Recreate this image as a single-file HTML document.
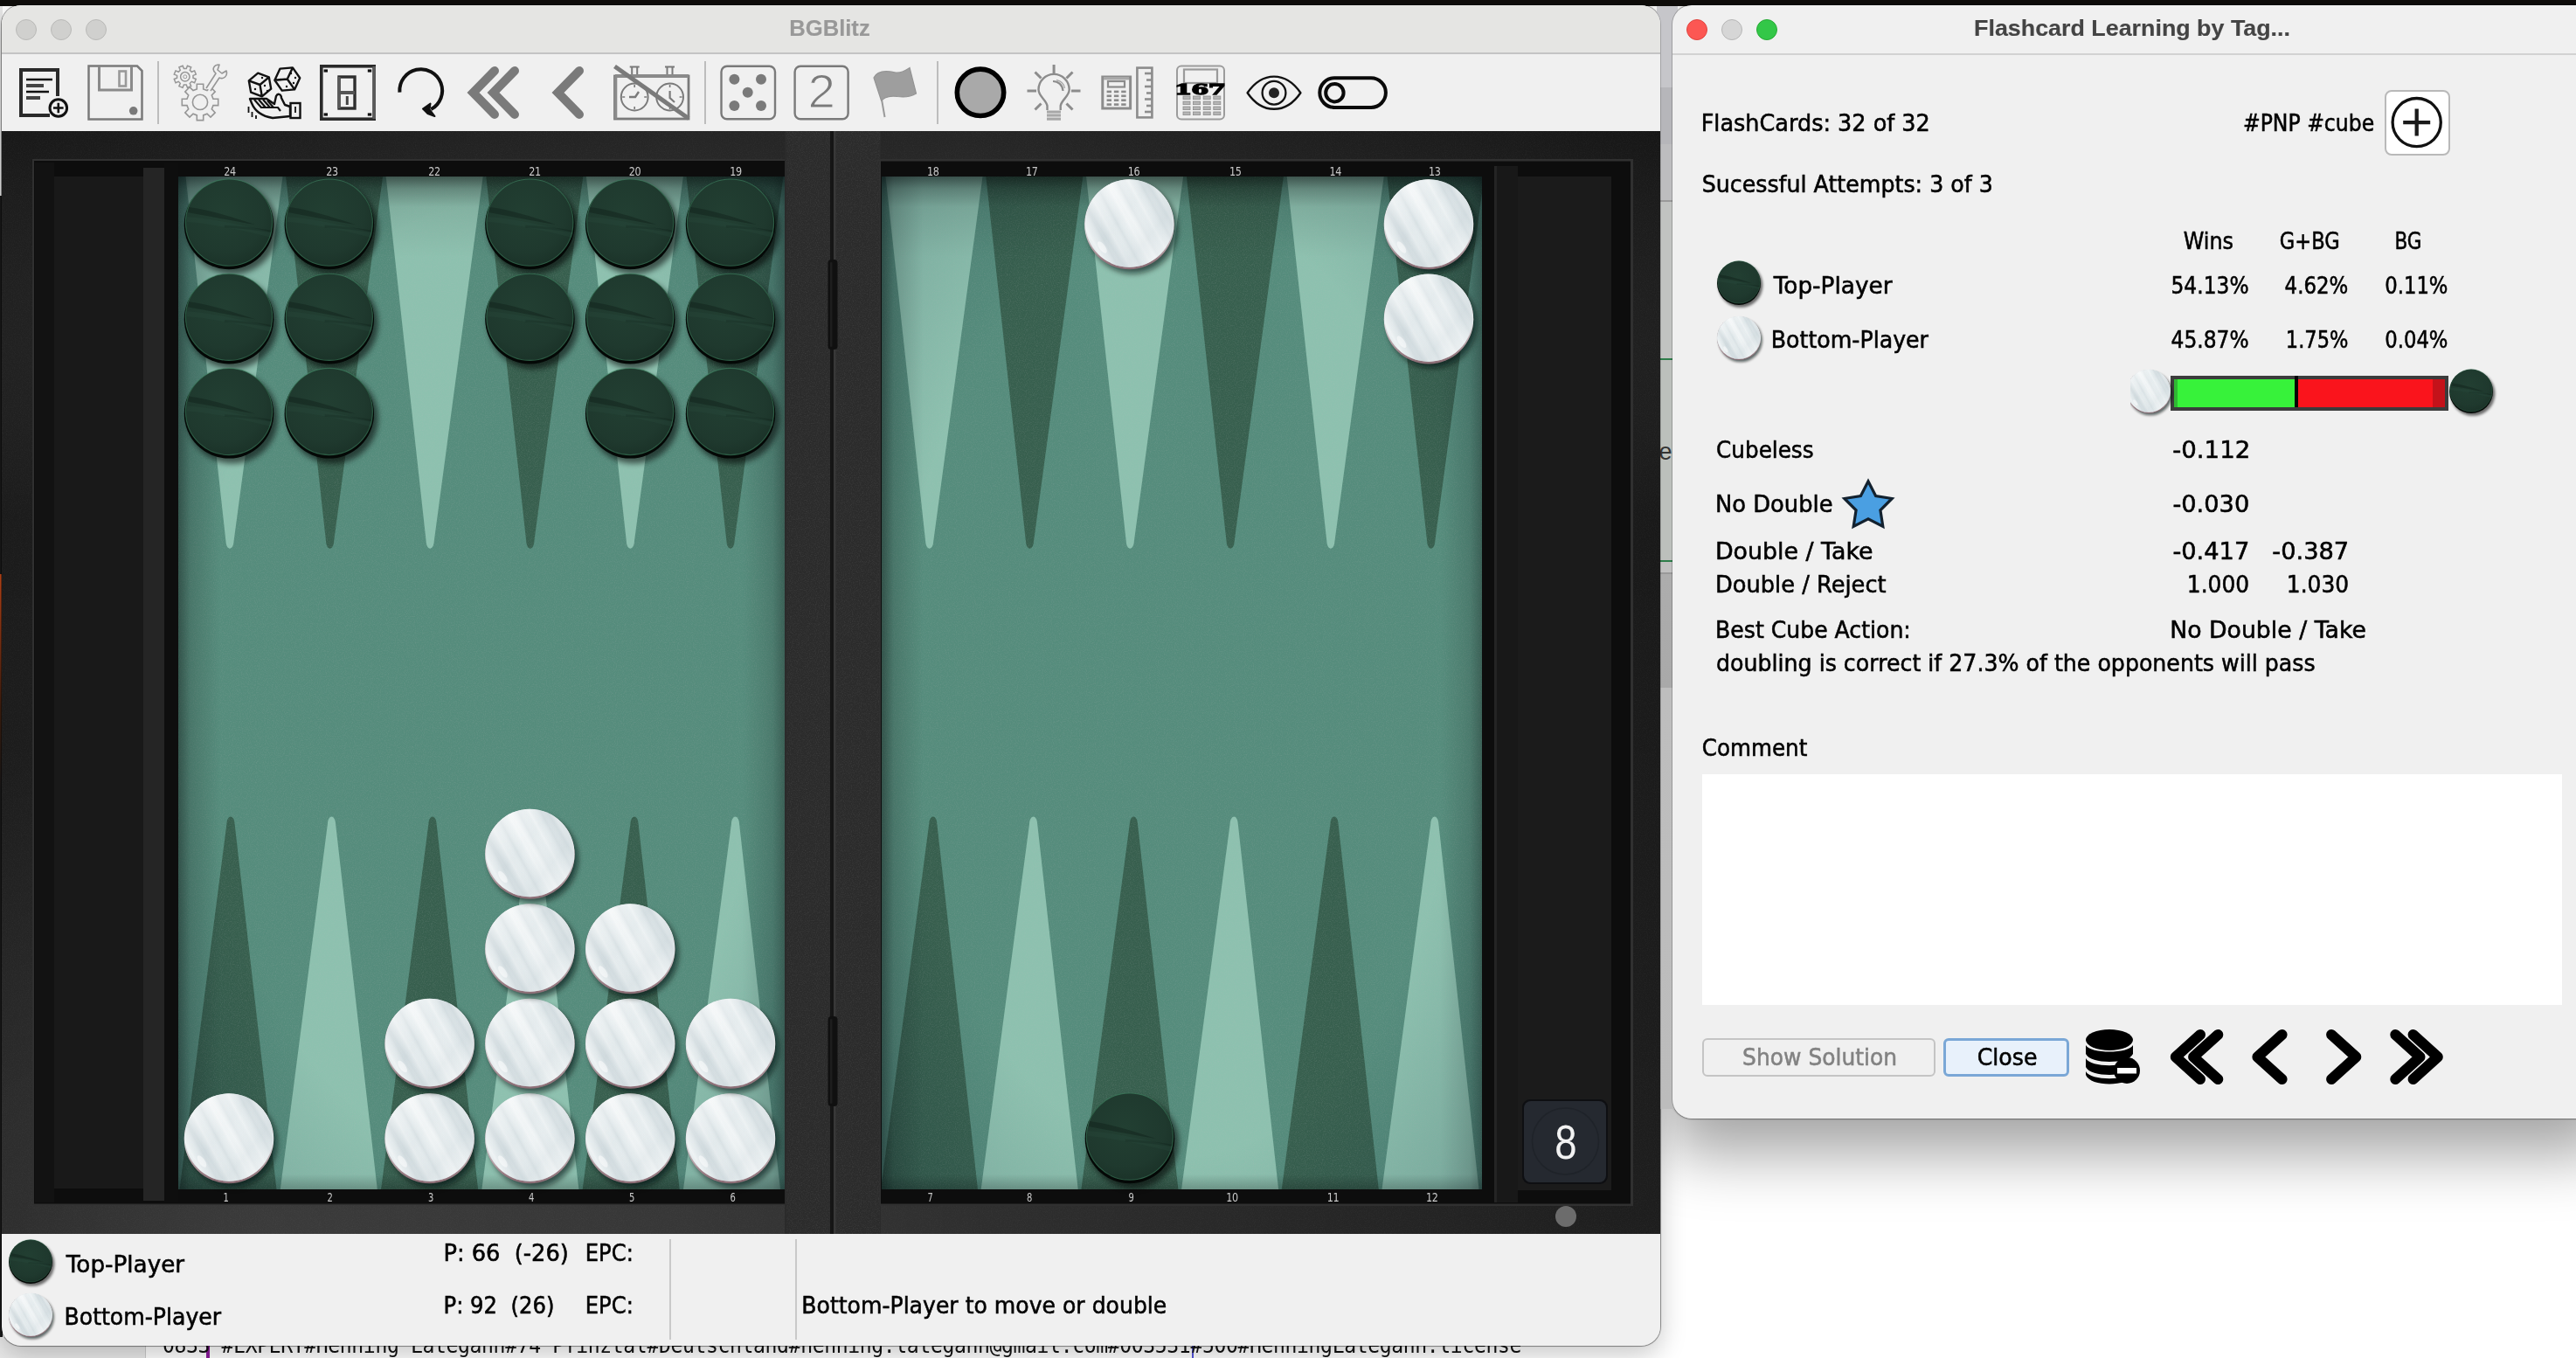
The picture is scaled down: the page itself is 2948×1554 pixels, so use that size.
<!DOCTYPE html><html><head><meta charset="utf-8"><title>BGBlitz</title><style>
*{box-sizing:border-box;margin:0;padding:0}
html,body{width:2948px;height:1554px;overflow:hidden;background:#fff}
body{position:relative;font-family:"DejaVu Sans","Liberation Sans",sans-serif;font-size:26px;color:#000;letter-spacing:-0.42px}
.a{position:absolute}
.t{position:absolute;white-space:pre;line-height:30px;height:30px}
.r{text-align:right}
.ttl{font-family:"Liberation Sans",sans-serif;font-weight:bold;font-size:26px;letter-spacing:0}
svg{position:absolute;overflow:visible}
svg text{font-family:"DejaVu Sans","Liberation Sans",sans-serif}
</style></head><body><div class="a" style="left:0;top:0;width:2948px;height:7px;background:#0f0d0b"></div><div class="a" style="left:0;top:7px;width:3px;height:1547px;background:linear-gradient(#e8e8e8 0,#e8e8e8 14%,#1a1a1a 14%,#1a1a1a 42%,#c84a1a 42%,#402010 52%,#1a1a1a 58%,#1a1a1a 100%)"></div><div class="a" style="left:0;top:1530px;width:166px;height:24px;background:#e9e9e9"></div><div class="a" style="left:166px;top:1530px;width:1740px;height:24px;background:#fff;border-left:1px solid #ccc"></div><div class="a" style="left:236px;top:1530px;width:4px;height:24px;background:#8b1a9b"></div><div class="a" style="left:1364px;top:1530px;width:2px;height:24px;background:#5555dd"></div><svg class="a" style="left:0;top:1530px;opacity:.999" width="1900" height="24" viewBox="0 1530 1900 24"><text x="186" y="1548" font-size="25" fill="#111" textLength="1555" lengthAdjust="spacingAndGlyphs" style="font-family:'DejaVu Sans Mono','Liberation Mono',monospace">0833 #EXPERT#Henning Lategahn#74 Pfinztal#Deutschland#henning.lategahn@gmail.com#003531#500#HenningLategahn.license</text></svg><div class="a" style="left:1914px;top:6px;width:1070px;height:1274px;border-radius:22px;box-shadow:0 34px 70px 6px rgba(0,0,0,.36),0 0 2px 1px rgba(0,0,0,.25)"></div><div class="a" style="left:2px;top:6px;width:1898px;height:1534px;border-radius:22px;box-shadow:0 10px 30px 0 rgba(0,0,0,.22),0 0 1px 1px rgba(0,0,0,.28)"></div><div class="a" style="left:1896px;top:7px;width:24px;height:1262px;background:linear-gradient(#c6c6ca 0,#c6c6ca 93px,#b6b6ba 93px,#b6b6ba 158px,#bdbdbf 158px,#bdbdbf 222px,#9a9a9a 222px,#9a9a9a 224px,#c1c3c1 224px,#c1c3c1 403px,#2e7d4a 403px,#2e7d4a 405px,#bcc0bc 405px,#bcc0bc 634px,#2e7d4a 634px,#2e7d4a 636px,#c0c0c0 636px,#c0c0c0 648px,#999 648px,#999 650px,#adadad 650px,#a9a9a9 780px,#bebebe 780px,#bcbcbc 100%)"></div><svg class="a" style="left:1896px;top:490px" width="18" height="50" viewBox="0 0 18 50"><text x="2.5" y="36" font-size="27" fill="#333" style="font-family:'Liberation Sans',sans-serif">e</text></svg><div class="a" style="left:1914px;top:6px;width:1070px;height:1274px;background:#f0f0f0;border-radius:22px;box-shadow:0 0 0 1px rgba(0,0,0,.2)"></div><div class="a" style="left:1914px;top:61px;width:1040px;height:2px;background:#d2d2d2"></div><div class="a" style="left:1930px;top:22px;width:24px;height:24px;border-radius:50%;background:#fc5753;border:1px solid #e0443e"></div><div class="a" style="left:1970px;top:22px;width:24px;height:24px;border-radius:50%;background:#d6d6d6;border:1px solid #b6b6b6"></div><div class="a" style="left:2010px;top:22px;width:24px;height:24px;border-radius:50%;background:#33c748;border:1px solid #27aa35"></div><div class="a" style="left:2728.5px;top:102.5px;width:75.5px;height:75px;background:#fff;border:2px solid #b9b9b9;border-radius:8px"></div><svg style="left:2737px;top:111px" width="58" height="58" viewBox="0 0 58 58"><circle cx="28.7" cy="29.1" r="27.6" fill="none" stroke="#111" stroke-width="3.3"/><path d="M28.7,13.6 V44.6 M13.2,29.1 H44.2" stroke="#1a1a1a" stroke-width="4.3" fill="none"/></svg><svg style="left:1955.5px;top:289.7px;" width="72" height="72" viewBox="-34 -34 72 72"><g transform="scale(0.4883)"><use href="#ckd"/></g></svg><svg style="left:1955.5px;top:352.8px;" width="72" height="72" viewBox="-34 -34 72 72"><g transform="scale(0.4883)"><use href="#ckw"/></g></svg><div class="a" style="left:2484px;top:430px;width:318px;height:40px;background:#3c3c3c"></div><div class="a" style="left:2488px;top:434px;width:138px;height:32px;background:#37f23a"></div><div class="a" style="left:2488px;top:434px;width:4px;height:32px;background:#2fb833"></div><div class="a" style="left:2626px;top:430px;width:4px;height:36px;background:#050505"></div><div class="a" style="left:2630px;top:434px;width:154px;height:32px;background:#fa141c"></div><div class="a" style="left:2784px;top:434px;width:14px;height:32px;background:#c4121a"></div><svg style="left:2425px;top:414px;clip-path:inset(0 0 0 13px);" width="72" height="72" viewBox="-34 -34 72 72"><g transform="scale(0.4883)"><use href="#ckw"/></g></svg><svg style="left:2793.5px;top:414px;" width="72" height="72" viewBox="-34 -34 72 72"><g transform="scale(0.4883)"><use href="#ckd"/></g></svg><svg style="left:0;top:0" width="2948" height="1554"><polygon points="2138.0,550.7 2146.6,567.5 2165.2,570.5 2151.9,583.8 2154.8,602.4 2138.0,593.9 2121.2,602.4 2124.1,583.8 2110.8,570.5 2129.4,567.5" fill="#4a9fe2" stroke="#13212e" stroke-width="3.2" stroke-linejoin="miter"/></svg><div class="a" style="left:1948px;top:886px;width:984px;height:264px;background:#fff"></div><div class="a" style="left:1948px;top:1188px;width:267px;height:44px;background:#f0f0f0;border:2px solid #c4c4c4;border-radius:6px"></div><div class="a" style="left:2224px;top:1188px;width:144px;height:44px;background:#e8f1fb;border:3px solid #7aa7d6;border-radius:6px"></div><svg style="left:2384px;top:1176px" width="68" height="68" viewBox="0 0 68 68">
<g fill="#000"><ellipse cx="30" cy="14" rx="27" ry="12"/>
<path d="M3,20 C8,30 52,30 57,20 V30 C52,42 8,42 3,30Z"/>
<path d="M3,35 C8,46 52,46 57,35 V45 C52,57 8,57 3,45Z"/>
<path d="M3,50 C8,61 52,61 57,50 V54 C52,68 8,68 3,54Z"/>
<circle cx="50" cy="49" r="15"/></g>
<rect x="39" y="46" width="22" height="6.5" fill="#fff"/></svg><svg style="left:0;top:0" width="2948" height="1554"><path d="M2518.0,1184 L2489.8,1209.5 L2518.0,1235 M2538.2999999999997,1184 L2510.1,1209.5 L2538.2999999999997,1235 M2611.6,1184 L2583.4,1209.5 L2611.6,1235 M2668.1,1184 L2696.2999999999997,1209.5 L2668.1,1235 M2741.3,1184 L2769.5,1209.5 L2741.3,1235 M2761.6,1184 L2789.7999999999997,1209.5 L2761.6,1235" fill="none" stroke="#000" stroke-width="12" stroke-linecap="round" stroke-linejoin="round"/></svg><div class="a" style="left:2px;top:6px;width:1898px;height:1534px;background:#f0f0f0;border-radius:22px;box-shadow:0 0 0 1px rgba(0,0,0,.18);overflow:hidden"><div class="a" style="left:0;top:0;width:1898px;height:55px;background:#e5e5e3"></div><div class="a" style="left:0;top:54px;width:1898px;height:2px;background:#c4c4c4"></div></div><div class="a" style="left:18px;top:22px;width:24px;height:24px;border-radius:50%;background:#d0d0ce;border:1px solid #b9b9b7"></div><div class="a" style="left:58px;top:22px;width:24px;height:24px;border-radius:50%;background:#d0d0ce;border:1px solid #b9b9b7"></div><div class="a" style="left:98px;top:22px;width:24px;height:24px;border-radius:50%;background:#d0d0ce;border:1px solid #b9b9b7"></div><svg class="a" style="left:0;top:0;opacity:.999" width="1900" height="150" viewBox="0 0 1900 150" fill="none" stroke-linecap="butt"><rect x="180" y="70" width="2" height="72" fill="#bdbdbd"/><rect x="806" y="70" width="2" height="72" fill="#bdbdbd"/><rect x="1072" y="70" width="2" height="72" fill="#bdbdbd"/><path d="M66,110 V80 H24 V132 H57" stroke="#2a2a2a" stroke-width="4"/><path d="M30,91 H60 M30,105 H56" stroke="#111" stroke-width="2.6"/><path d="M30,98 H50 M30,112 H46" stroke="#444" stroke-width="4"/><circle cx="66.8" cy="123.5" r="9.8" stroke="#111" stroke-width="3" fill="#f0f0f0"/><path d="M61,123.5 H72.6 M66.8,117.7 V129.3" stroke="#111" stroke-width="2.6"/><path d="M101.5,75.5 H157 L162.5,81 V136.5 H101.5 Z" stroke="#7a7a7a" stroke-width="2.5"/><path d="M113.5,76 V103 H150.5 V76" stroke="#8a8a8a" stroke-width="3"/><rect x="136.5" y="81.5" width="7.5" height="17" stroke="#999" stroke-width="2.6"/><circle cx="152.7" cy="126.8" r="4.8" fill="#7a7a7a"/><path d="M224.3,90.5 L222.6,94.7 L219.3,93.3 L217.3,95.3 L218.7,98.6 L214.5,100.3 L213.2,97.0 L210.4,97.0 L209.1,100.3 L204.9,98.6 L206.3,95.3 L204.3,93.3 L201.0,94.7 L199.3,90.5 L202.6,89.2 L202.6,86.4 L199.3,85.1 L201.0,80.9 L204.3,82.3 L206.3,80.3 L204.9,77.0 L209.1,75.3 L210.4,78.6 L213.2,78.6 L214.5,75.3 L218.7,77.0 L217.3,80.3 L219.3,82.3 L222.6,80.9 L224.3,85.1 L221.0,86.4 L221.0,89.2Z" stroke="#969696" stroke-width="1.5"/><circle cx="211.8" cy="87.8" r="5.2" stroke="#969696" stroke-width="1.5"/><circle cx="211.8" cy="87.8" r="2" stroke="#999" stroke-width="1"/><path d="M232.7,137.6 L225.3,137.6 L225.3,131.9 L221.0,130.2 L217.0,134.1 L211.8,128.9 L215.7,124.9 L214.0,120.6 L208.3,120.6 L208.3,113.2 L214.0,113.2 L215.7,108.9 L211.8,104.9 L217.0,99.7 L221.0,103.6 L225.3,101.9 L225.3,96.2 L232.7,96.2 L232.7,101.9 L237.0,103.6 L241.0,99.7 L246.2,104.9 L242.3,108.9 L244.0,113.2 L249.7,113.2 L249.7,120.6 L244.0,120.6 L242.3,124.9 L246.2,128.9 L241.0,134.1 L237.0,130.2 L232.7,131.9Z" stroke="#969696" stroke-width="1.6" fill="#f0f0f0"/><circle cx="229" cy="116.9" r="8.6" stroke="#969696" stroke-width="1.6"/><path d="M236,101 L247,84 C242,80 244,74 251,74 L249,80 L254,84 L259,81 C261,87 256,91 251,89 L241,104" stroke="#969696" stroke-width="1.6" fill="#f0f0f0" stroke-linejoin="round"/><path d="M310.2,101.6 L299.8,110.3 L287.2,105.7 L284.8,92.4 L295.2,83.7 L307.8,88.3Z M297.5,97.0 L299.8,110.3 M297.5,97.0 L284.8,92.4 M297.5,97.0 L307.8,88.3" stroke="#111" stroke-width="2.4" stroke-linejoin="round"/><path d="M343.2,89.2 L337.1,102.4 L322.7,103.6 L314.4,91.8 L320.5,78.6 L334.9,77.4Z M328.8,90.5 L337.1,102.4 M328.8,90.5 L314.4,91.8 M328.8,90.5 L334.9,77.4" stroke="#111" stroke-width="2.4" stroke-linejoin="round"/><circle cx="292" cy="102" r="1.2" fill="#111"/><circle cx="303" cy="98" r="1.2" fill="#111"/><circle cx="306" cy="104" r="1.2" fill="#111"/><circle cx="300" cy="89" r="1.2" fill="#111"/><circle cx="321" cy="91" r="1.2" fill="#111"/><circle cx="333" cy="84" r="1.2" fill="#111"/><circle cx="336" cy="95" r="1.2" fill="#111"/><circle cx="328" cy="99" r="1.2" fill="#111"/><circle cx="338" cy="89" r="1.2" fill="#111"/><path d="M286,113 H305 L314,119 L316,110 C318,106 322,108 322,112 L326,120 L332,122 V133 L312,135 C300,133 292,128 288,118 Z" stroke="#111" stroke-width="2.4" stroke-linejoin="round"/><path d="M291,114 L299,123 M296,114 L304,123 M301,114 L309,123 M306,115 L313,123 M298,123 H318 L321,127" stroke="#111" stroke-width="2.2"/><rect x="332.5" y="118" width="11" height="17" stroke="#111" stroke-width="2.4"/><path d="M338,122 V129" stroke="#111" stroke-width="1.8"/><path d="M284.5,122 V129 M288.5,128 V134 M293,132 V136" stroke="#111" stroke-width="1.8"/><rect x="367.8" y="75.8" width="60.4" height="60.4" stroke="#2a2a2a" stroke-width="3.6"/><path d="M428.2,76 V136" stroke="#5a5a5a" stroke-width="3.6"/><rect x="370.6" y="79.4" width="4.4" height="3.2" fill="#111"/><rect x="420.8" y="79.4" width="4.4" height="3.2" fill="#111"/><rect x="370.6" y="129.4" width="4.4" height="3.2" fill="#111"/><rect x="420.8" y="129.4" width="4.4" height="3.2" fill="#111"/><rect x="388" y="88" width="18" height="36" stroke="#2e2e2e" stroke-width="3.4"/><path d="M388,88 V124" stroke="#5a5a5a" stroke-width="3.4"/><path d="M388,106 H406" stroke="#555" stroke-width="4"/><path d="M397.3,110 V120" stroke="#444" stroke-width="3"/><path d="M457.4,105.6 A24.4,24.4 0 1 1 493.3,125.1" stroke="#111" stroke-width="4" stroke-linecap="butt"/><path d="M484,124.5 L492.5,118.5 L491.5,125 L497.5,133 L489.5,130 Z" fill="#111" stroke="#111" stroke-width="2" stroke-linejoin="round"/><path d="M566,81 L541.5,106 L566,131 M589,81 L564.5,106 L589,131 M663,81 L638.5,106 L663,131" stroke="#7a7a7a" stroke-width="10" stroke-linecap="round" stroke-linejoin="miter"/><rect x="703.5" y="87" width="84.5" height="49" stroke="#7a7a7a" stroke-width="2.8"/><path d="M704,87 H788" stroke="#8a8a8a" stroke-width="4"/><path d="M704.5,87 V136" stroke="#8a8a8a" stroke-width="3.6"/><path d="M723.2,85 V77.5 M729.2,85 V77.5 M720.7,76.5 H731.7" stroke="#7a7a7a" stroke-width="2"/><path d="M763.5,85 V77.5 M769.5,85 V77.5 M761.0,76.5 H772.0" stroke="#7a7a7a" stroke-width="2"/><circle cx="726.2" cy="111" r="15.4" stroke="#7a7a7a" stroke-width="2"/><circle cx="766.6" cy="111" r="15.4" stroke="#7a7a7a" stroke-width="2"/><path d="M726.2,97 V100 M726.2,122 V125 M712.2,111 H715.2 M737.2,111 H740.2" stroke="#7a7a7a" stroke-width="1.6"/><path d="M766.6,97 V100 M766.6,122 V125 M752.6,111 H755.6 M777.6,111 H780.6" stroke="#7a7a7a" stroke-width="1.6"/><path d="M720,111 H727 L731,105" stroke="#7a7a7a" stroke-width="2.4"/><path d="M766.6,104 V112 L772,117" stroke="#7a7a7a" stroke-width="2.2"/><path d="M703.5,76 L788,135.5" stroke="#7a7a7a" stroke-width="5"/><rect x="825.5" y="75.8" width="61.5" height="60.5" rx="6.5" stroke="#7a7a7a" stroke-width="2.4"/><circle cx="840.4" cy="90.7" r="6" fill="#7a7a7a"/><circle cx="871" cy="90.7" r="6" fill="#7a7a7a"/><circle cx="855.7" cy="105.8" r="6" fill="#7a7a7a"/><circle cx="840.4" cy="121" r="6" fill="#7a7a7a"/><circle cx="871" cy="121" r="6" fill="#7a7a7a"/><rect x="909.6" y="75.8" width="61" height="60.5" rx="6.5" stroke="#7a7a7a" stroke-width="2.4"/><text x="940" y="123.3" font-size="54" text-anchor="middle" fill="#7a7a7a" stroke="#f0f0f0" stroke-width="1.2" style="font-family:'Liberation Sans',sans-serif" textLength="31" lengthAdjust="spacingAndGlyphs">2</text><path d="M1004.5,88 L1012.5,134" stroke="#9a9a9a" stroke-width="2"/><path d="M1000,89 C1004,80 1016,81 1025,83 C1032,84 1037,80 1041,77.5 L1048.5,107 C1042,111 1034,111.5 1027,110.5 C1018,109 1012,112 1008.5,115 Z" fill="#9e9e9e" stroke="#949494" stroke-width="1.2"/><circle cx="1122" cy="105.8" r="26.7" fill="#a9a9a9" stroke="#000" stroke-width="5.6"/><path d="M1198.5,126 V121 C1197,114 1188.5,110 1188.5,102.5 A17.6,17.6 0 0 1 1223.7,102.5 C1223.7,110 1215,114 1213.7,121 V126" stroke="#8c8c8c" stroke-width="2.4"/><path d="M1205,93 C1211,93 1216,97 1216.5,104" stroke="#8c8c8c" stroke-width="2.2"/><path d="M1209,91.5 C1215,93 1218,97 1218.5,101" stroke="#aaa" stroke-width="1.4"/><path d="M1198,128 H1214 M1198,132 H1214 M1198,136.3 H1214" stroke="#8c8c8c" stroke-width="2.6"/><rect x="1198" y="126.5" width="16" height="11" fill="#b9b9b9" opacity=".6"/><path d="M1206.1,74 V84 M1175.5,104 H1186 M1226,104 H1236.5 M1184.5,82.5 L1191.5,89.5 M1227.5,82.5 L1220.5,89.5 M1184.5,125.5 L1191.5,118.5 M1227.5,125.5 L1220.5,118.5" stroke="#8c8c8c" stroke-width="3"/><rect x="1261.8" y="88" width="31.8" height="36" stroke="#8c8c8c" stroke-width="3"/><rect x="1263" y="88" width="29" height="3.4" fill="#a8a8a8"/><rect x="1268" y="93" width="19" height="6.5" stroke="#8c8c8c" stroke-width="2.2"/><rect x="1266.6" y="103.6" width="5.4" height="2.6" fill="#8a8a8a"/><rect x="1274.9" y="103.6" width="5.4" height="2.6" fill="#8a8a8a"/><rect x="1283.2" y="103.6" width="5.4" height="2.6" fill="#8a8a8a"/><rect x="1266.6" y="108.5" width="5.4" height="2.6" fill="#8a8a8a"/><rect x="1274.9" y="108.5" width="5.4" height="2.6" fill="#8a8a8a"/><rect x="1283.2" y="108.5" width="5.4" height="2.6" fill="#8a8a8a"/><rect x="1266.6" y="113.4" width="5.4" height="2.6" fill="#8a8a8a"/><rect x="1274.9" y="113.4" width="5.4" height="2.6" fill="#8a8a8a"/><rect x="1283.2" y="113.4" width="5.4" height="2.6" fill="#8a8a8a"/><rect x="1266.6" y="118.3" width="5.4" height="2.6" fill="#8a8a8a"/><rect x="1274.9" y="118.3" width="5.4" height="2.6" fill="#8a8a8a"/><rect x="1283.2" y="118.3" width="5.4" height="2.6" fill="#8a8a8a"/><rect x="1301.4" y="77.6" width="17" height="56.8" stroke="#8c8c8c" stroke-width="2.6"/><rect x="1310" y="82.7" width="8" height="2.6" fill="#8e8e8e"/><rect x="1312" y="90.2" width="6" height="2.6" fill="#8e8e8e"/><rect x="1310" y="97.7" width="8" height="2.6" fill="#8e8e8e"/><rect x="1312" y="105.2" width="6" height="2.6" fill="#8e8e8e"/><rect x="1310" y="112.2" width="8" height="2.6" fill="#8e8e8e"/><rect x="1312" y="119.7" width="6" height="2.6" fill="#8e8e8e"/><rect x="1310" y="126.7" width="8" height="2.6" fill="#8e8e8e"/><rect x="1347" y="75.6" width="54" height="61" rx="5" stroke="#9c9c9c" stroke-width="2"/><rect x="1355" y="79.5" width="38" height="15.5" stroke="#9a9a9a" stroke-width="2.2"/><rect x="1354.0" y="110.0" width="8" height="3.6" fill="#b5b5b5" stroke="#8c8c8c" stroke-width=".8"/><rect x="1365.6" y="110.0" width="8" height="3.6" fill="#b5b5b5" stroke="#8c8c8c" stroke-width=".8"/><rect x="1377.2" y="110.0" width="8" height="3.6" fill="#b5b5b5" stroke="#8c8c8c" stroke-width=".8"/><rect x="1388.8" y="110.0" width="8" height="3.6" fill="#b5b5b5" stroke="#8c8c8c" stroke-width=".8"/><rect x="1354.0" y="116.0" width="8" height="3.6" fill="#b5b5b5" stroke="#8c8c8c" stroke-width=".8"/><rect x="1365.6" y="116.0" width="8" height="3.6" fill="#b5b5b5" stroke="#8c8c8c" stroke-width=".8"/><rect x="1377.2" y="116.0" width="8" height="3.6" fill="#b5b5b5" stroke="#8c8c8c" stroke-width=".8"/><rect x="1388.8" y="116.0" width="8" height="3.6" fill="#b5b5b5" stroke="#8c8c8c" stroke-width=".8"/><rect x="1354.0" y="122.0" width="8" height="3.6" fill="#b5b5b5" stroke="#8c8c8c" stroke-width=".8"/><rect x="1365.6" y="122.0" width="8" height="3.6" fill="#b5b5b5" stroke="#8c8c8c" stroke-width=".8"/><rect x="1377.2" y="122.0" width="8" height="3.6" fill="#b5b5b5" stroke="#8c8c8c" stroke-width=".8"/><rect x="1388.8" y="122.0" width="8" height="3.6" fill="#b5b5b5" stroke="#8c8c8c" stroke-width=".8"/><rect x="1354.0" y="128.0" width="8" height="3.6" fill="#b5b5b5" stroke="#8c8c8c" stroke-width=".8"/><rect x="1365.6" y="128.0" width="8" height="3.6" fill="#b5b5b5" stroke="#8c8c8c" stroke-width=".8"/><rect x="1377.2" y="128.0" width="8" height="3.6" fill="#b5b5b5" stroke="#8c8c8c" stroke-width=".8"/><rect x="1388.8" y="128.0" width="8" height="3.6" fill="#b5b5b5" stroke="#8c8c8c" stroke-width=".8"/><text x="1373" y="107.8" font-size="17" font-weight="bold" text-anchor="middle" fill="#000" stroke="#000" stroke-width="1.3" textLength="58" lengthAdjust="spacingAndGlyphs" style="font-family:'DejaVu Serif','Liberation Serif',serif">167</text><path d="M1427.6,106.2 C1436,94 1447,87.6 1458,87.6 C1469,87.6 1480,94 1488.4,106.2 C1480,118.5 1469,124.8 1458,124.8 C1447,124.8 1436,118.5 1427.6,106.2 Z" stroke="#111" stroke-width="2.4" stroke-linejoin="round"/><circle cx="1458" cy="106.2" r="13.4" stroke="#111" stroke-width="2.3"/><circle cx="1458" cy="106.2" r="6" fill="#222"/><rect x="1510.3" y="89.3" width="75.6" height="33.6" rx="16.8" stroke="#0a0a0a" stroke-width="4"/><circle cx="1527.4" cy="106.2" r="10.2" stroke="#0a0a0a" stroke-width="4"/></svg><svg class="a" style="left:0;top:0;opacity:.999" width="2948" height="1554" viewBox="0 0 2948 1554"><defs>
<filter id="nz" x="0" y="0" width="100%" height="100%"><feTurbulence type="fractalNoise" baseFrequency="0.9" numOctaves="2" seed="3" result="n"/><feColorMatrix type="matrix" values="0 0 0 0 0.5  0 0 0 0 0.5  0 0 0 0 0.5  0.9 0 0 0 -0.38"/></filter>
<filter id="sh" x="-30%" y="-30%" width="170%" height="170%"><feGaussianBlur stdDeviation="3.2"/></filter>
<filter id="sh2" x="-30%" y="-30%" width="170%" height="170%"><feGaussianBlur stdDeviation="1.5"/></filter>
<radialGradient id="gd" cx="45%" cy="40%" r="65%"><stop offset="0" stop-color="#223f32"/><stop offset="0.7" stop-color="#1f392e"/><stop offset="1" stop-color="#1a3127"/></radialGradient>
<linearGradient id="gdl" x1="0" y1="0" x2="1" y2="1"><stop offset="0" stop-color="#4a9a74"/><stop offset="0.45" stop-color="#2c5d48"/><stop offset="0.55" stop-color="#050a08"/><stop offset="1" stop-color="#000"/></linearGradient>
<linearGradient id="gw" x1="0" y1="0" x2="0.9" y2="0.45" spreadMethod="reflect"><stop offset="0" stop-color="#f3f8f9"/><stop offset="0.5" stop-color="#e3eaec"/><stop offset="1" stop-color="#d3dcdf"/></linearGradient>
<linearGradient id="gws" gradientUnits="userSpaceOnUse" x1="0" y1="0" x2="-10" y2="5.5" spreadMethod="reflect"><stop offset="0" stop-color="#fff" stop-opacity=".38"/><stop offset="0.45" stop-color="#e6edef" stop-opacity=".05"/><stop offset="1" stop-color="#c0ccd1" stop-opacity=".36"/></linearGradient>
<linearGradient id="gws2" gradientUnits="userSpaceOnUse" x1="7" y1="0" x2="-24" y2="19" spreadMethod="reflect"><stop offset="0" stop-color="#fff" stop-opacity=".5"/><stop offset="0.55" stop-color="#dfe7ea" stop-opacity="0"/><stop offset="1" stop-color="#b5c3c9" stop-opacity=".42"/></linearGradient>
<linearGradient id="gws3" gradientUnits="userSpaceOnUse" x1="-40" y1="-30" x2="45" y2="38"><stop offset="0" stop-color="#fff" stop-opacity=".35"/><stop offset="0.35" stop-color="#fff" stop-opacity="0"/><stop offset="0.7" stop-color="#cfd9dd" stop-opacity=".25"/><stop offset="1" stop-color="#fff" stop-opacity=".3"/></linearGradient>
<linearGradient id="gwr" x1="0" y1="0" x2="0" y2="1"><stop offset="0" stop-color="#eef3f4"/><stop offset="0.55" stop-color="#e2e8ea"/><stop offset="0.8" stop-color="#c5b4b8" stop-opacity=".6"/><stop offset="1" stop-color="#8d6f77" stop-opacity="0"/></linearGradient><linearGradient id="gwl" x1="0" y1="0" x2="1" y2="1"><stop offset="0" stop-color="#f6fbfc"/><stop offset="0.5" stop-color="#e9eff0"/><stop offset="0.62" stop-color="#b39aa0"/><stop offset="1" stop-color="#7e5c64"/></linearGradient>
<linearGradient id="frameG" x1="0" y1="0" x2="1" y2="0"><stop offset="0" stop-color="#1b1b1b"/><stop offset="0.12" stop-color="#202020"/><stop offset="0.4" stop-color="#2a2a2a"/><stop offset="0.6" stop-color="#2a2a2a"/><stop offset="0.88" stop-color="#1f1f1f"/><stop offset="1" stop-color="#191919"/></linearGradient><radialGradient id="feltR" cx="50%" cy="50%" r="75%"><stop offset="0" stop-color="#0a2a3a" stop-opacity="0"/><stop offset="0.62" stop-color="#0a2a3a" stop-opacity="0"/><stop offset="1" stop-color="#062030" stop-opacity=".2"/></radialGradient><linearGradient id="frameV" x1="0" y1="0" x2="0" y2="1"><stop offset="0" stop-color="#000" stop-opacity=".12"/><stop offset="0.35" stop-color="#fff" stop-opacity="0"/><stop offset="1" stop-color="#fff" stop-opacity=".02"/></linearGradient><radialGradient id="frameBL" cx="15%" cy="100%" r="45%"><stop offset="0" stop-color="#fff" stop-opacity=".10"/><stop offset="1" stop-color="#fff" stop-opacity="0"/></radialGradient><linearGradient id="feltV" x1="0" y1="0" x2="0" y2="1"><stop offset="0" stop-color="#000" stop-opacity=".55"/><stop offset="0.012" stop-color="#000" stop-opacity=".28"/><stop offset="0.03" stop-color="#000" stop-opacity=".08"/><stop offset="0.08" stop-color="#000" stop-opacity="0"/><stop offset="0.985" stop-color="#000" stop-opacity="0"/><stop offset="1" stop-color="#000" stop-opacity=".22"/></linearGradient>
<linearGradient id="feltH" x1="0" y1="0" x2="1" y2="0"><stop offset="0" stop-color="#000" stop-opacity=".4"/><stop offset="0.02" stop-color="#000" stop-opacity=".15"/><stop offset="0.07" stop-color="#000" stop-opacity="0"/><stop offset="0.93" stop-color="#000" stop-opacity="0"/><stop offset="0.98" stop-color="#000" stop-opacity=".12"/><stop offset="1" stop-color="#000" stop-opacity=".3"/></linearGradient>
<clipPath id="cpL"><rect x="204" y="202" width="694" height="1159"/></clipPath><clipPath id="cpR"><rect x="1009" y="202" width="687" height="1159"/></clipPath><g id="ckd"><circle cx="4" cy="5" r="52" fill="#000" opacity=".55" filter="url(#sh)"/><circle r="51.2" fill="#040806"/><circle r="49.6" cx="0" cy="-2.4" fill="url(#gd)"/><path d="M-46,-20 C-22,-17 5,-8 30,0 C10,-3 -20,-9 -47,-14Z" fill="#0c1a14" opacity=".38"/><path d="M-5,2 C15,3 32,5 49,8" stroke="#11241b" stroke-width="2.5" fill="none" opacity=".4"/><path d="M-48,-6 C-20,-4 10,2 49,12" stroke="#2c5243" stroke-width="6" fill="none" opacity=".22"/><circle r="49.6" cx="0" cy="-2.4" fill="none" stroke="#3f8562" stroke-width="1.1" opacity=".6"/></g>
<g id="ckw"><circle cx="4" cy="5" r="51" fill="#04100a" opacity=".6" filter="url(#sh)"/><circle r="51.2" fill="#8d6f77"/><circle r="51.2" fill="url(#gwr)"/><circle r="50.2" cx="0" cy="-1.5" fill="#e4ebed"/><circle r="50.2" cx="0" cy="-1.5" fill="url(#gws)"/><circle r="50.2" cx="0" cy="-1.5" fill="url(#gws2)"/><circle r="50.2" cx="0" cy="-1.5" fill="url(#gws3)"/><ellipse cx="-31" cy="26" rx="3.5" ry="8" transform="rotate(-35 -31 26)" fill="#fff" opacity=".5"/></g>
</defs><rect x="2" y="150" width="1898" height="1262" fill="url(#frameG)"/><rect x="2" y="150" width="1898" height="1262" fill="url(#frameV)"/><rect x="2" y="150" width="1898" height="1262" fill="url(#frameBL)"/><rect x="2" y="150" width="1898" height="1262" fill="#888" filter="url(#nz)" opacity=".12"/><rect x="37" y="182" width="862" height="1197" fill="#303030"/><rect x="39" y="184" width="859" height="1193.5" fill="#0d0d0d"/><rect x="62" y="202" width="102" height="1158" fill="#191919"/><rect x="40" y="186" width="22" height="1190" fill="#121212"/><rect x="164" y="192" width="24" height="1182" fill="#252525"/><rect x="188" y="186" width="16" height="1190" fill="#0e0e0e"/><rect x="898" y="150" width="110" height="1262" fill="#2b2b2b"/><rect x="900" y="150" width="107" height="1262" fill="#888" filter="url(#nz)" opacity=".25"/><rect x="950" y="150" width="4" height="1262" fill="#151515"/><rect x="954" y="150" width="2.5" height="1262" fill="#383838"/><rect x="947.5" y="297" width="11" height="103" rx="4" fill="#101010"/><rect x="950" y="300" width="2.5" height="97" rx="1" fill="#1d1d1d"/><rect x="947.5" y="1163" width="11" height="103" rx="4" fill="#101010"/><rect x="950" y="1166" width="2.5" height="97" rx="1" fill="#1d1d1d"/><rect x="1006.5" y="182" width="862.5" height="1198" fill="#303030"/><rect x="1008" y="184.5" width="858" height="1193" fill="#0d0d0d"/><rect x="1710" y="190" width="3" height="1186" fill="#242424"/><rect x="1713" y="190" width="24" height="1186" fill="#181818"/><rect x="1737" y="202" width="107" height="1160" fill="#1b1b1b"/><rect x="204" y="202" width="694" height="1159" fill="#558c7c"/><rect x="1009" y="202" width="687" height="1159" fill="#558c7c"/><g clip-path="url(#cpL)"><path d="M212.5,202 L323.5,202 L267.6,619 C267.1,630.5 258.9,630.5 258.4,619 Z" fill="#8dc1af"/><path d="M205.5,1361 L316.5,1361 L268.6,943 C268.1,931.5 259.9,931.5 259.4,943 Z" fill="#375f4e"/><path d="M327.1,202 L438.1,202 L382.2,619 C381.7,630.5 373.5,630.5 373.0,619 Z" fill="#375f4e"/><path d="M320.8,1361 L431.8,1361 L384.1,943 C383.6,931.5 375.4,931.5 374.9,943 Z" fill="#8dc1af"/><path d="M441.7,202 L552.7,202 L496.8,619 C496.3,630.5 488.1,630.5 487.6,619 Z" fill="#8dc1af"/><path d="M436.1,1361 L547.1,1361 L499.6,943 C499.1,931.5 490.9,931.5 490.4,943 Z" fill="#375f4e"/><path d="M556.3,202 L667.3,202 L611.4,619 C610.9,630.5 602.7,630.5 602.2,619 Z" fill="#375f4e"/><path d="M551.4,1361 L662.4,1361 L615.1,943 C614.6,931.5 606.4,931.5 605.9,943 Z" fill="#8dc1af"/><path d="M670.9,202 L781.9,202 L726.0,619 C725.5,630.5 717.3,630.5 716.8,619 Z" fill="#8dc1af"/><path d="M666.7,1361 L777.7,1361 L730.6,943 C730.1,931.5 721.9,931.5 721.4,943 Z" fill="#375f4e"/><path d="M785.5,202 L896.5,202 L840.6,619 C840.1,630.5 831.9,630.5 831.4,619 Z" fill="#375f4e"/><path d="M782.0,1361 L893.0,1361 L846.1,943 C845.6,931.5 837.4,931.5 836.9,943 Z" fill="#8dc1af"/></g><g clip-path="url(#cpR)"><path d="M1013.5,202 L1124.5,202 L1068.3,619 C1067.8,630.5 1059.6,630.5 1059.1,619 Z" fill="#8dc1af"/><path d="M1008.0,1361 L1119.0,1361 L1072.4,943 C1071.9,931.5 1063.7,931.5 1063.2,943 Z" fill="#375f4e"/><path d="M1128.3,202 L1239.3,202 L1183.1,619 C1182.6,630.5 1174.4,630.5 1173.9,619 Z" fill="#375f4e"/><path d="M1122.7,1361 L1233.7,1361 L1187.2,943 C1186.7,931.5 1178.5,931.5 1178.0,943 Z" fill="#8dc1af"/><path d="M1243.1,202 L1354.1,202 L1297.9,619 C1297.4,630.5 1289.2,630.5 1288.7,619 Z" fill="#8dc1af"/><path d="M1237.4,1361 L1348.4,1361 L1302.0,943 C1301.5,931.5 1293.3,931.5 1292.8,943 Z" fill="#375f4e"/><path d="M1357.9,202 L1468.9,202 L1412.7,619 C1412.2,630.5 1404.0,630.5 1403.5,619 Z" fill="#375f4e"/><path d="M1352.1,1361 L1463.1,1361 L1416.8,943 C1416.3,931.5 1408.1,931.5 1407.6,943 Z" fill="#8dc1af"/><path d="M1472.7,202 L1583.7,202 L1527.5,619 C1527.0,630.5 1518.8,630.5 1518.3,619 Z" fill="#8dc1af"/><path d="M1466.8,1361 L1577.8,1361 L1531.6,943 C1531.1,931.5 1522.9,931.5 1522.4,943 Z" fill="#375f4e"/><path d="M1587.5,202 L1698.5,202 L1642.3,619 C1641.8,630.5 1633.6,630.5 1633.1,619 Z" fill="#375f4e"/><path d="M1581.5,1361 L1692.5,1361 L1646.4,943 C1645.9,931.5 1637.7,931.5 1637.2,943 Z" fill="#8dc1af"/></g><rect x="204" y="202" width="694" height="1159" fill="#888" filter="url(#nz)" opacity=".35"/><rect x="204" y="202" width="694" height="1159" fill="url(#feltV)"/><rect x="204" y="202" width="694" height="1159" fill="url(#feltH)"/><rect x="204" y="202" width="694" height="1159" fill="url(#feltR)"/><rect x="1009" y="202" width="687" height="1159" fill="#888" filter="url(#nz)" opacity=".35"/><rect x="1009" y="202" width="687" height="1159" fill="url(#feltV)"/><rect x="1009" y="202" width="687" height="1159" fill="url(#feltH)"/><rect x="1009" y="202" width="687" height="1159" fill="url(#feltR)"/><text x="263.0" y="200.8" font-size="13.5" fill="#c9c9c9" text-anchor="middle" textLength="13.5" lengthAdjust="spacingAndGlyphs" style="font-family:'DejaVu Sans Condensed','Liberation Sans',sans-serif">24</text><text x="380.0" y="200.8" font-size="13.5" fill="#c9c9c9" text-anchor="middle" textLength="13.5" lengthAdjust="spacingAndGlyphs" style="font-family:'DejaVu Sans Condensed','Liberation Sans',sans-serif">23</text><text x="497.0" y="200.8" font-size="13.5" fill="#c9c9c9" text-anchor="middle" textLength="13.5" lengthAdjust="spacingAndGlyphs" style="font-family:'DejaVu Sans Condensed','Liberation Sans',sans-serif">22</text><text x="612.0" y="200.8" font-size="13.5" fill="#c9c9c9" text-anchor="middle" textLength="13.5" lengthAdjust="spacingAndGlyphs" style="font-family:'DejaVu Sans Condensed','Liberation Sans',sans-serif">21</text><text x="726.6" y="200.8" font-size="13.5" fill="#c9c9c9" text-anchor="middle" textLength="13.5" lengthAdjust="spacingAndGlyphs" style="font-family:'DejaVu Sans Condensed','Liberation Sans',sans-serif">20</text><text x="842.0" y="200.8" font-size="13.5" fill="#c9c9c9" text-anchor="middle" textLength="13.5" lengthAdjust="spacingAndGlyphs" style="font-family:'DejaVu Sans Condensed','Liberation Sans',sans-serif">19</text><text x="1067.8" y="200.8" font-size="13.5" fill="#c9c9c9" text-anchor="middle" textLength="13.5" lengthAdjust="spacingAndGlyphs" style="font-family:'DejaVu Sans Condensed','Liberation Sans',sans-serif">18</text><text x="1180.8" y="200.8" font-size="13.5" fill="#c9c9c9" text-anchor="middle" textLength="13.5" lengthAdjust="spacingAndGlyphs" style="font-family:'DejaVu Sans Condensed','Liberation Sans',sans-serif">17</text><text x="1297.5" y="200.8" font-size="13.5" fill="#c9c9c9" text-anchor="middle" textLength="13.5" lengthAdjust="spacingAndGlyphs" style="font-family:'DejaVu Sans Condensed','Liberation Sans',sans-serif">16</text><text x="1413.7" y="200.8" font-size="13.5" fill="#c9c9c9" text-anchor="middle" textLength="13.5" lengthAdjust="spacingAndGlyphs" style="font-family:'DejaVu Sans Condensed','Liberation Sans',sans-serif">15</text><text x="1528.3" y="200.8" font-size="13.5" fill="#c9c9c9" text-anchor="middle" textLength="13.5" lengthAdjust="spacingAndGlyphs" style="font-family:'DejaVu Sans Condensed','Liberation Sans',sans-serif">14</text><text x="1641.7" y="200.8" font-size="13.5" fill="#c9c9c9" text-anchor="middle" textLength="13.5" lengthAdjust="spacingAndGlyphs" style="font-family:'DejaVu Sans Condensed','Liberation Sans',sans-serif">13</text><text x="258.5" y="1374.8" font-size="13.5" fill="#c9c9c9" text-anchor="middle" textLength="6" lengthAdjust="spacingAndGlyphs" style="font-family:'DejaVu Sans Condensed','Liberation Sans',sans-serif">1</text><text x="377.6" y="1374.8" font-size="13.5" fill="#c9c9c9" text-anchor="middle" textLength="6" lengthAdjust="spacingAndGlyphs" style="font-family:'DejaVu Sans Condensed','Liberation Sans',sans-serif">2</text><text x="493.0" y="1374.8" font-size="13.5" fill="#c9c9c9" text-anchor="middle" textLength="6" lengthAdjust="spacingAndGlyphs" style="font-family:'DejaVu Sans Condensed','Liberation Sans',sans-serif">3</text><text x="608.0" y="1374.8" font-size="13.5" fill="#c9c9c9" text-anchor="middle" textLength="6" lengthAdjust="spacingAndGlyphs" style="font-family:'DejaVu Sans Condensed','Liberation Sans',sans-serif">4</text><text x="723.0" y="1374.8" font-size="13.5" fill="#c9c9c9" text-anchor="middle" textLength="6" lengthAdjust="spacingAndGlyphs" style="font-family:'DejaVu Sans Condensed','Liberation Sans',sans-serif">5</text><text x="838.5" y="1374.8" font-size="13.5" fill="#c9c9c9" text-anchor="middle" textLength="6" lengthAdjust="spacingAndGlyphs" style="font-family:'DejaVu Sans Condensed','Liberation Sans',sans-serif">6</text><text x="1064.5" y="1374.8" font-size="13.5" fill="#c9c9c9" text-anchor="middle" textLength="6" lengthAdjust="spacingAndGlyphs" style="font-family:'DejaVu Sans Condensed','Liberation Sans',sans-serif">7</text><text x="1178.0" y="1374.8" font-size="13.5" fill="#c9c9c9" text-anchor="middle" textLength="6" lengthAdjust="spacingAndGlyphs" style="font-family:'DejaVu Sans Condensed','Liberation Sans',sans-serif">8</text><text x="1294.6" y="1374.8" font-size="13.5" fill="#c9c9c9" text-anchor="middle" textLength="6" lengthAdjust="spacingAndGlyphs" style="font-family:'DejaVu Sans Condensed','Liberation Sans',sans-serif">9</text><text x="1410.0" y="1374.8" font-size="13.5" fill="#c9c9c9" text-anchor="middle" textLength="13.5" lengthAdjust="spacingAndGlyphs" style="font-family:'DejaVu Sans Condensed','Liberation Sans',sans-serif">10</text><text x="1525.5" y="1374.8" font-size="13.5" fill="#c9c9c9" text-anchor="middle" textLength="13.5" lengthAdjust="spacingAndGlyphs" style="font-family:'DejaVu Sans Condensed','Liberation Sans',sans-serif">11</text><text x="1638.8" y="1374.8" font-size="13.5" fill="#c9c9c9" text-anchor="middle" textLength="13.5" lengthAdjust="spacingAndGlyphs" style="font-family:'DejaVu Sans Condensed','Liberation Sans',sans-serif">12</text><use href="#ckd" x="262.0" y="257.0"/><use href="#ckd" x="262.0" y="365.2"/><use href="#ckd" x="262.0" y="473.4"/><use href="#ckd" x="376.8" y="257.0"/><use href="#ckd" x="376.8" y="365.2"/><use href="#ckd" x="376.8" y="473.4"/><use href="#ckd" x="606.4" y="257.0"/><use href="#ckd" x="606.4" y="365.2"/><use href="#ckd" x="721.2" y="257.0"/><use href="#ckd" x="721.2" y="365.2"/><use href="#ckd" x="721.2" y="473.4"/><use href="#ckd" x="836.0" y="257.0"/><use href="#ckd" x="836.0" y="365.2"/><use href="#ckd" x="836.0" y="473.4"/><use href="#ckw" x="1292.4" y="257.0"/><use href="#ckw" x="1635.0" y="257.0"/><use href="#ckw" x="1635.0" y="365.2"/><use href="#ckw" x="262.0" y="1303.0"/><use href="#ckw" x="491.6" y="1303.0"/><use href="#ckw" x="491.6" y="1194.5"/><use href="#ckw" x="606.4" y="1303.0"/><use href="#ckw" x="606.4" y="1194.5"/><use href="#ckw" x="606.4" y="1086.0"/><use href="#ckw" x="606.4" y="977.5"/><use href="#ckw" x="721.2" y="1303.0"/><use href="#ckw" x="721.2" y="1194.5"/><use href="#ckw" x="721.2" y="1086.0"/><use href="#ckw" x="836.0" y="1303.0"/><use href="#ckw" x="836.0" y="1194.5"/><use href="#ckd" x="1292.9" y="1303.0"/><rect x="1742" y="1258" width="98" height="97" rx="9" fill="#0e0f12"/><rect x="1744" y="1260" width="94" height="93" rx="8" fill="#252930"/><circle cx="1791.5" cy="1306" r="38" fill="none" stroke="#1f2329" stroke-width="1.5"/><text x="1791.8" y="1326" font-size="55" fill="#f2f2f2" text-anchor="middle" style="font-family:'Liberation Sans',sans-serif" textLength="25" lengthAdjust="spacingAndGlyphs">8</text><circle cx="1792" cy="1392" r="12" fill="#6c6c6c"/></svg><svg style="left:1px;top:1409.5px;" width="72" height="72" viewBox="-34 -34 72 72"><g transform="scale(0.4883)"><use href="#ckd"/></g></svg><svg style="left:1px;top:1470.6px;" width="72" height="72" viewBox="-34 -34 72 72"><g transform="scale(0.4883)"><use href="#ckw"/></g></svg><div class="a" style="left:766px;top:1418px;width:2px;height:115px;background:#c9c9c9"></div><div class="a" style="left:910px;top:1418px;width:2px;height:115px;background:#c9c9c9"></div><svg class="a" style="left:0;top:0;opacity:.999" width="2948" height="1554" viewBox="0 0 2948 1554"><text x="2259.1" y="41.3" fill="#444" stroke="#444" stroke-width="0.15" textLength="361.9" lengthAdjust="spacingAndGlyphs" xml:space="preserve" style="font-family:'Liberation Sans',sans-serif;font-size:26.0px;letter-spacing:0;white-space:pre;font-weight:bold">Flashcard Learning by Tag...</text><text x="1994.1" y="1219.0" fill="#828282" stroke="#828282" stroke-width="0.55" textLength="177.0" lengthAdjust="spacingAndGlyphs" xml:space="preserve" style="font-family:'DejaVu Sans','Liberation Sans',sans-serif;font-size:26.0px;letter-spacing:0;white-space:pre">Show Solution</text><text x="2262.7" y="1219.0" fill="#000" stroke="#000" stroke-width="0.55" textLength="68.8" lengthAdjust="spacingAndGlyphs" xml:space="preserve" style="font-family:'DejaVu Sans','Liberation Sans',sans-serif;font-size:26.0px;letter-spacing:0;white-space:pre">Close</text><text x="1946.7" y="150.2" fill="#000" stroke="#000" stroke-width="0.55" textLength="262.1" lengthAdjust="spacingAndGlyphs" xml:space="preserve" style="font-family:'DejaVu Sans','Liberation Sans',sans-serif;font-size:26.0px;letter-spacing:0;white-space:pre">FlashCards: 32 of 32</text><text x="2566.9" y="150.2" fill="#000" stroke="#000" stroke-width="0.55" textLength="150.3" lengthAdjust="spacingAndGlyphs" xml:space="preserve" style="font-family:'DejaVu Sans','Liberation Sans',sans-serif;font-size:26.0px;letter-spacing:0;white-space:pre">#PNP #cube</text><text x="1947.7" y="219.5" fill="#000" stroke="#000" stroke-width="0.55" textLength="333.1" lengthAdjust="spacingAndGlyphs" xml:space="preserve" style="font-family:'DejaVu Sans','Liberation Sans',sans-serif;font-size:26.0px;letter-spacing:0;white-space:pre">Sucessful Attempts: 3 of 3</text><text x="2498.7" y="285.2" fill="#000" stroke="#000" stroke-width="0.55" textLength="57.4" lengthAdjust="spacingAndGlyphs" xml:space="preserve" style="font-family:'DejaVu Sans','Liberation Sans',sans-serif;font-size:26.0px;letter-spacing:0;white-space:pre">Wins</text><text x="2608.8" y="285.2" fill="#000" stroke="#000" stroke-width="0.55" textLength="68.9" lengthAdjust="spacingAndGlyphs" xml:space="preserve" style="font-family:'DejaVu Sans','Liberation Sans',sans-serif;font-size:26.0px;letter-spacing:0;white-space:pre">G+BG</text><text x="2740.4" y="285.2" fill="#000" stroke="#000" stroke-width="0.55" textLength="31.1" lengthAdjust="spacingAndGlyphs" xml:space="preserve" style="font-family:'DejaVu Sans','Liberation Sans',sans-serif;font-size:26.0px;letter-spacing:0;white-space:pre">BG</text><text x="2029.7" y="335.7" fill="#000" stroke="#000" stroke-width="0.55" textLength="135.8" lengthAdjust="spacingAndGlyphs" xml:space="preserve" style="font-family:'DejaVu Sans','Liberation Sans',sans-serif;font-size:26.0px;letter-spacing:0;white-space:pre">Top-Player</text><text x="2484.5" y="335.7" fill="#000" stroke="#000" stroke-width="0.55" textLength="89.1" lengthAdjust="spacingAndGlyphs" xml:space="preserve" style="font-family:'DejaVu Sans','Liberation Sans',sans-serif;font-size:26.0px;letter-spacing:0;white-space:pre">54.13%</text><text x="2614.6" y="335.7" fill="#000" stroke="#000" stroke-width="0.55" textLength="72.8" lengthAdjust="spacingAndGlyphs" xml:space="preserve" style="font-family:'DejaVu Sans','Liberation Sans',sans-serif;font-size:26.0px;letter-spacing:0;white-space:pre">4.62%</text><text x="2729.2" y="335.7" fill="#000" stroke="#000" stroke-width="0.55" textLength="72.3" lengthAdjust="spacingAndGlyphs" xml:space="preserve" style="font-family:'DejaVu Sans','Liberation Sans',sans-serif;font-size:26.0px;letter-spacing:0;white-space:pre">0.11%</text><text x="2026.8" y="397.8" fill="#000" stroke="#000" stroke-width="0.55" textLength="180.2" lengthAdjust="spacingAndGlyphs" xml:space="preserve" style="font-family:'DejaVu Sans','Liberation Sans',sans-serif;font-size:26.0px;letter-spacing:0;white-space:pre">Bottom-Player</text><text x="2484.6" y="397.8" fill="#000" stroke="#000" stroke-width="0.55" textLength="89.0" lengthAdjust="spacingAndGlyphs" xml:space="preserve" style="font-family:'DejaVu Sans','Liberation Sans',sans-serif;font-size:26.0px;letter-spacing:0;white-space:pre">45.87%</text><text x="2615.8" y="397.8" fill="#000" stroke="#000" stroke-width="0.55" textLength="71.6" lengthAdjust="spacingAndGlyphs" xml:space="preserve" style="font-family:'DejaVu Sans','Liberation Sans',sans-serif;font-size:26.0px;letter-spacing:0;white-space:pre">1.75%</text><text x="2729.2" y="397.8" fill="#000" stroke="#000" stroke-width="0.55" textLength="72.3" lengthAdjust="spacingAndGlyphs" xml:space="preserve" style="font-family:'DejaVu Sans','Liberation Sans',sans-serif;font-size:26.0px;letter-spacing:0;white-space:pre">0.04%</text><text x="1964.1" y="523.5" fill="#000" stroke="#000" stroke-width="0.55" textLength="111.5" lengthAdjust="spacingAndGlyphs" xml:space="preserve" style="font-family:'DejaVu Sans','Liberation Sans',sans-serif;font-size:26.0px;letter-spacing:0;white-space:pre">Cubeless</text><text x="2486.3" y="523.5" fill="#000" stroke="#000" stroke-width="0.55" textLength="89.0" lengthAdjust="spacingAndGlyphs" xml:space="preserve" style="font-family:'DejaVu Sans','Liberation Sans',sans-serif;font-size:26.0px;letter-spacing:0;white-space:pre">-0.112</text><text x="1963.0" y="586.1" fill="#000" stroke="#000" stroke-width="0.55" textLength="134.6" lengthAdjust="spacingAndGlyphs" xml:space="preserve" style="font-family:'DejaVu Sans','Liberation Sans',sans-serif;font-size:26.0px;letter-spacing:0;white-space:pre">No Double</text><text x="2486.4" y="586.1" fill="#000" stroke="#000" stroke-width="0.55" textLength="87.9" lengthAdjust="spacingAndGlyphs" xml:space="preserve" style="font-family:'DejaVu Sans','Liberation Sans',sans-serif;font-size:26.0px;letter-spacing:0;white-space:pre">-0.030</text><text x="1962.9" y="640.2" fill="#000" stroke="#000" stroke-width="0.55" textLength="180.7" lengthAdjust="spacingAndGlyphs" xml:space="preserve" style="font-family:'DejaVu Sans','Liberation Sans',sans-serif;font-size:26.0px;letter-spacing:0;white-space:pre">Double / Take</text><text x="2486.4" y="640.2" fill="#000" stroke="#000" stroke-width="0.55" textLength="87.9" lengthAdjust="spacingAndGlyphs" xml:space="preserve" style="font-family:'DejaVu Sans','Liberation Sans',sans-serif;font-size:26.0px;letter-spacing:0;white-space:pre">-0.417</text><text x="2600.3" y="640.2" fill="#000" stroke="#000" stroke-width="0.55" textLength="87.9" lengthAdjust="spacingAndGlyphs" xml:space="preserve" style="font-family:'DejaVu Sans','Liberation Sans',sans-serif;font-size:26.0px;letter-spacing:0;white-space:pre">-0.387</text><text x="1963.0" y="678.0" fill="#000" stroke="#000" stroke-width="0.55" textLength="195.6" lengthAdjust="spacingAndGlyphs" xml:space="preserve" style="font-family:'DejaVu Sans','Liberation Sans',sans-serif;font-size:26.0px;letter-spacing:0;white-space:pre">Double / Reject</text><text x="2502.8" y="678.0" fill="#000" stroke="#000" stroke-width="0.55" textLength="71.3" lengthAdjust="spacingAndGlyphs" xml:space="preserve" style="font-family:'DejaVu Sans','Liberation Sans',sans-serif;font-size:26.0px;letter-spacing:0;white-space:pre">1.000</text><text x="2616.8" y="678.0" fill="#000" stroke="#000" stroke-width="0.55" textLength="71.3" lengthAdjust="spacingAndGlyphs" xml:space="preserve" style="font-family:'DejaVu Sans','Liberation Sans',sans-serif;font-size:26.0px;letter-spacing:0;white-space:pre">1.030</text><text x="1963.1" y="729.5" fill="#000" stroke="#000" stroke-width="0.55" textLength="223.7" lengthAdjust="spacingAndGlyphs" xml:space="preserve" style="font-family:'DejaVu Sans','Liberation Sans',sans-serif;font-size:26.0px;letter-spacing:0;white-space:pre">Best Cube Action:</text><text x="2483.2" y="729.5" fill="#000" stroke="#000" stroke-width="0.55" textLength="224.7" lengthAdjust="spacingAndGlyphs" xml:space="preserve" style="font-family:'DejaVu Sans','Liberation Sans',sans-serif;font-size:26.0px;letter-spacing:0;white-space:pre">No Double / Take</text><text x="1964.0" y="767.5" fill="#000" stroke="#000" stroke-width="0.55" textLength="685.6" lengthAdjust="spacingAndGlyphs" xml:space="preserve" style="font-family:'DejaVu Sans','Liberation Sans',sans-serif;font-size:26.0px;letter-spacing:0;white-space:pre">doubling is correct if 27.3% of the opponents will pass</text><text x="1947.8" y="864.5" fill="#000" stroke="#000" stroke-width="0.55" textLength="120.5" lengthAdjust="spacingAndGlyphs" xml:space="preserve" style="font-family:'DejaVu Sans','Liberation Sans',sans-serif;font-size:26.0px;letter-spacing:0;white-space:pre">Comment</text><text x="903.3" y="41.4" fill="#989898" stroke="#989898" stroke-width="0.15" textLength="92.4" lengthAdjust="spacingAndGlyphs" xml:space="preserve" style="font-family:'Liberation Sans',sans-serif;font-size:26.0px;letter-spacing:0;white-space:pre;font-weight:bold">BGBlitz</text><text x="75.8" y="1455.8" fill="#000" stroke="#000" stroke-width="0.55" textLength="135.3" lengthAdjust="spacingAndGlyphs" xml:space="preserve" style="font-family:'DejaVu Sans','Liberation Sans',sans-serif;font-size:26.0px;letter-spacing:0;white-space:pre">Top-Player</text><text x="73.5" y="1515.5" fill="#000" stroke="#000" stroke-width="0.55" textLength="179.6" lengthAdjust="spacingAndGlyphs" xml:space="preserve" style="font-family:'DejaVu Sans','Liberation Sans',sans-serif;font-size:26.0px;letter-spacing:0;white-space:pre">Bottom-Player</text><text x="507.4" y="1443.0" fill="#000" stroke="#000" stroke-width="0.55" textLength="143.5" lengthAdjust="spacingAndGlyphs" xml:space="preserve" style="font-family:'DejaVu Sans','Liberation Sans',sans-serif;font-size:26.0px;letter-spacing:0;white-space:pre">P: 66  (-26)</text><text x="669.8" y="1443.0" fill="#000" stroke="#000" stroke-width="0.55" textLength="55.0" lengthAdjust="spacingAndGlyphs" xml:space="preserve" style="font-family:'DejaVu Sans','Liberation Sans',sans-serif;font-size:26.0px;letter-spacing:0;white-space:pre">EPC:</text><text x="507.5" y="1502.5" fill="#000" stroke="#000" stroke-width="0.55" textLength="127.0" lengthAdjust="spacingAndGlyphs" xml:space="preserve" style="font-family:'DejaVu Sans','Liberation Sans',sans-serif;font-size:26.0px;letter-spacing:0;white-space:pre">P: 92  (26)</text><text x="669.8" y="1502.5" fill="#000" stroke="#000" stroke-width="0.55" textLength="55.0" lengthAdjust="spacingAndGlyphs" xml:space="preserve" style="font-family:'DejaVu Sans','Liberation Sans',sans-serif;font-size:26.0px;letter-spacing:0;white-space:pre">EPC:</text><text x="917.3" y="1502.5" fill="#000" stroke="#000" stroke-width="0.55" textLength="418.0" lengthAdjust="spacingAndGlyphs" xml:space="preserve" style="font-family:'DejaVu Sans','Liberation Sans',sans-serif;font-size:26.0px;letter-spacing:0;white-space:pre">Bottom-Player to move or double</text></svg></body></html>
